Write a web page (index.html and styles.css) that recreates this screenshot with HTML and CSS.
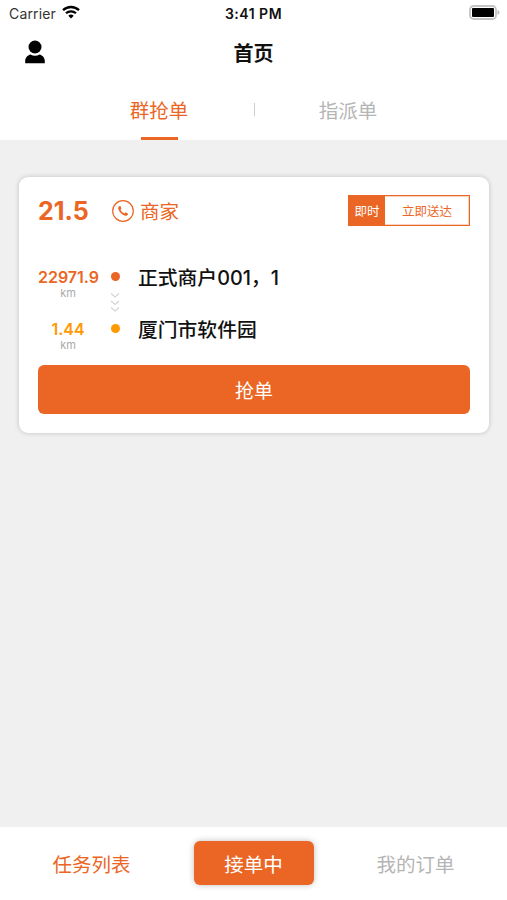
FILE: index.html
```html
<!DOCTYPE html>
<html lang="zh-CN">
<head>
    <meta charset="UTF-8">
    <meta name="viewport" content="width=device-width, initial-scale=1.0">
    <title>首页</title>
    <link rel="stylesheet" href="styles.css">
</head>
<body>
    <header>
        <div class="status-bar">
            <div class="carrier">
                <span>Carrier</span>
                <svg class="wifi" width="18" height="14" viewBox="0 0 18 14">
                    <path d="M1 5.2a11.6 11.6 0 0 1 16 0" fill="none" stroke="#000" stroke-width="2.4"/>
                    <path d="M4 8.3a7.2 7.2 0 0 1 10 0" fill="none" stroke="#000" stroke-width="2.2"/>
                    <path d="M6.3 10.7a4 4 0 0 1 5.4 0L9 13.6z"/>
                </svg>
            </div>
            <div class="time">3:41 PM</div>
            <div class="battery">
                <svg width="31" height="15" viewBox="0 0 31 15">
                    <rect x="1" y="1" width="26" height="13" rx="3.5" fill="#fff" stroke="#c4c4c4" stroke-width="1.8"/>
                    <rect x="3" y="3" width="22" height="9" rx="1"/>
                    <path d="M28.5 5v5q2-.8 2-2.500t-2-2.500z" fill="#bbb"/>
                </svg>
            </div>
        </div>
        <div class="title-bar">
            <svg class="user-icon" width="20" height="24" viewBox="0 0 20 24">
                <circle cx="10" cy="7" r="6.500"/>
                <path d="M.2 23.300v-2.300c0-3.400 2.300-5.800 5.300-6.600 2.700 1.700 6.300 1.700 9 0 3 .8 5.300 3.200 5.300 6.600v2.300z"/>
                <path d="M4 12.800q6 3.400 12 0" fill="none" stroke="#fff" stroke-width=".8"/>
            </svg>
            <h1>首页</h1>
        </div>
        <nav class="tabs">
            <a class="tab active">群抢单</a>
            <span class="divider"></span>
            <a class="tab">指派单</a>
        </nav>
    </header>

    <main>
        <div class="card">
            <div class="card-head">
                <span class="price">21.5</span>
                <svg class="phone-icon" width="22" height="22" viewBox="0 0 22 22">
                    <circle cx="11" cy="11" r="10.300" fill="none" stroke="#eb6625" stroke-width="1.200"/>
                    <path d="M7.700 6.100C6.400 6.700 5.900 7.700 6.300 9c1 3.300 3.600 5.900 6.900 6.700 1.300.3 2.300-.2 2.800-1.400.1-.4 0-.6-.3-.8l-1.700-1c-.3-.2-.6-.1-.8.1l-.8.8c-1.800-.7-3.100-2-3.900-3.700l.7-.8c.2-.3.3-.6.1-.9l-.8-1.700c-.2-.3-.5-.4-.8-.2z" fill="#eb6625"/>
                </svg>
                <span class="merchant">商家</span>
                <div class="badge">
                    <span class="badge-type">即时</span>
                    <span class="badge-text">立即送达</span>
                </div>
            </div>

            <div class="route">
                <div class="distance">
                    <b>22971.9</b>
                    <small>km</small>
                </div>
                <div class="marker">
                    <i class="dot"></i>
                    <svg class="arrows" width="10" height="21" viewBox="0 0 10 21" fill="none" stroke="#d4d4d4" stroke-width="1.200">
                        <path d="M1 1.500l4 3.500 4-3.500M1 9l4 3.500L9 9M1 15.500L5 19l4-3.500"/>
                    </svg>
                </div>
                <div class="address">正式商户001，1</div>
            </div>
            <div class="route">
                <div class="distance end">
                    <b>1.44</b>
                    <small>km</small>
                </div>
                <div class="marker">
                    <i class="dot end"></i>
                </div>
                <div class="address">厦门市软件园</div>
            </div>

            <button class="grab-button">抢单</button>
        </div>
    </main>

    <footer>
        <a class="footer-link active">任务列表</a>
        <button class="work-button">接单中</button>
        <a class="footer-link">我的订单</a>
    </footer>
</body>
</html>
```

FILE: styles.css
```css
* {
    box-sizing: border-box;
}
body {
    margin: 0;
    height: 100vh;
    display: flex;
    flex-direction: column;
    background-color: #f0f0f0;
    font-family: Inter, "Noto Sans CJK SC", sans-serif;
    color: #111;
}
button {
    border: none;
    padding: 0;
    background-color: #eb6625;
    color: white;
    font-family: inherit;
    font-size: 19px;
}
header {
    height: 140px;
    background-color: white;
}
.status-bar {
    display: grid;
    grid-template-columns: 1fr auto 1fr;
    align-items: center;
    height: 27px;
    padding: 0 7px 0 9px;
    font-size: 14px;
}
.carrier {
    display: flex;
    align-items: center;
    gap: 6px;
    color: #333;
    letter-spacing: 0.15px;
}
.wifi {
    margin-top: -3px;
}
.time {
    font-weight: 600;
    letter-spacing: 0.5px;
    padding-right: 2px;
}
.battery {
    display: flex;
    justify-content: flex-end;
    margin-top: -2px;
}
.title-bar {
    display: grid;
    grid-template-columns: 1fr auto 1fr;
    align-items: center;
    height: 51px;
    padding: 0 25px;
}
.user-icon {
    margin-top: -2px;
}
h1 {
    margin: 2px 0 0;
    font-size: 20px;
    line-height: 30px;
    font-weight: 700;
}
.tabs {
    display: flex;
    justify-content: center;
    height: 62px;
}
.tab {
    position: relative;
    width: 94px;
    line-height: 66px;
    text-align: center;
    font-size: 19.5px;
    color: #b5b5b5;
}
.tab.active {
    color: #eb6625;
}
.tab.active::after {
    content: "";
    position: absolute;
    left: 29px;
    bottom: 0;
    width: 37px;
    height: 3px;
    background-color: #eb6625;
}
.divider {
    width: 1px;
    height: 13px;
    margin: 25px 46px 0 48px;
    background-color: #ccc;
}
main {
    flex: 1;
    padding: 37px 18px 0 19px;
}
.card {
    height: 256px;
    padding: 18px 19px 19px;
    border-radius: 9px;
    background-color: white;
    box-shadow: 0 0 5px rgba(0, 0, 0, 0.2);
}
.card-head {
    display: flex;
    align-items: center;
    height: 31px;
    margin-bottom: 39px;
    color: #eb6625;
}
.price {
    width: 74px;
    font-size: 25px;
    font-weight: 700;
}
.merchant {
    margin-left: 6px;
    font-size: 19.5px;
}
.badge {
    display: flex;
    width: 122px;
    height: 31px;
    margin-left: auto;
    border: 1px solid #eb6625;
    box-shadow: inset 0 0 0 1px #f9d2c0;
    font-size: 12.5px;
    line-height: 31px;
    text-align: center;
}
.badge-type {
    width: 36px;
    background-color: #eb6625;
    color: white;
}
.badge-text {
    flex: 1;
}
.route {
    display: flex;
    height: 52px;
}
.distance {
    width: 60px;
    padding-top: 1px;
    text-align: center;
    color: #eb6625;
}
.distance b {
    display: block;
    font-size: 16px;
    line-height: 22px;
    font-weight: 600;
}
.distance small {
    display: block;
    font-size: 11px;
    line-height: 11px;
    color: #aaa;
}
.distance.end {
    color: #f90;
}
.marker {
    width: 34px;
    display: flex;
    flex-direction: column;
    align-items: center;
    padding-top: 7px;
}
.dot {
    width: 9px;
    height: 9px;
    border-radius: 50%;
    background-color: #eb6625;
}
.dot.end {
    background-color: #f90;
}
.arrows {
    margin-top: 11px;
}
.address {
    margin-left: 6px;
    font-size: 19.8px;
    line-height: 27px;
    font-weight: 500;
}
.grab-button {
    display: block;
    width: 100%;
    height: 49px;
    margin-top: -4px;
    border-radius: 6px;
}
footer {
    display: flex;
    align-items: flex-start;
    justify-content: center;
    height: 73px;
    padding-top: 14px;
    background-color: white;
}
.footer-link {
    width: 82px;
    line-height: 48px;
    text-align: center;
    font-size: 19.5px;
    color: #b5b5b5;
}
.footer-link.active {
    color: #eb6625;
}
.work-button {
    width: 120px;
    height: 44px;
    margin: 0 61px;
    border-radius: 6px;
    font-size: 19.5px;
    box-shadow: 0 0 6px rgba(0, 0, 0, 0.25);
}
```
